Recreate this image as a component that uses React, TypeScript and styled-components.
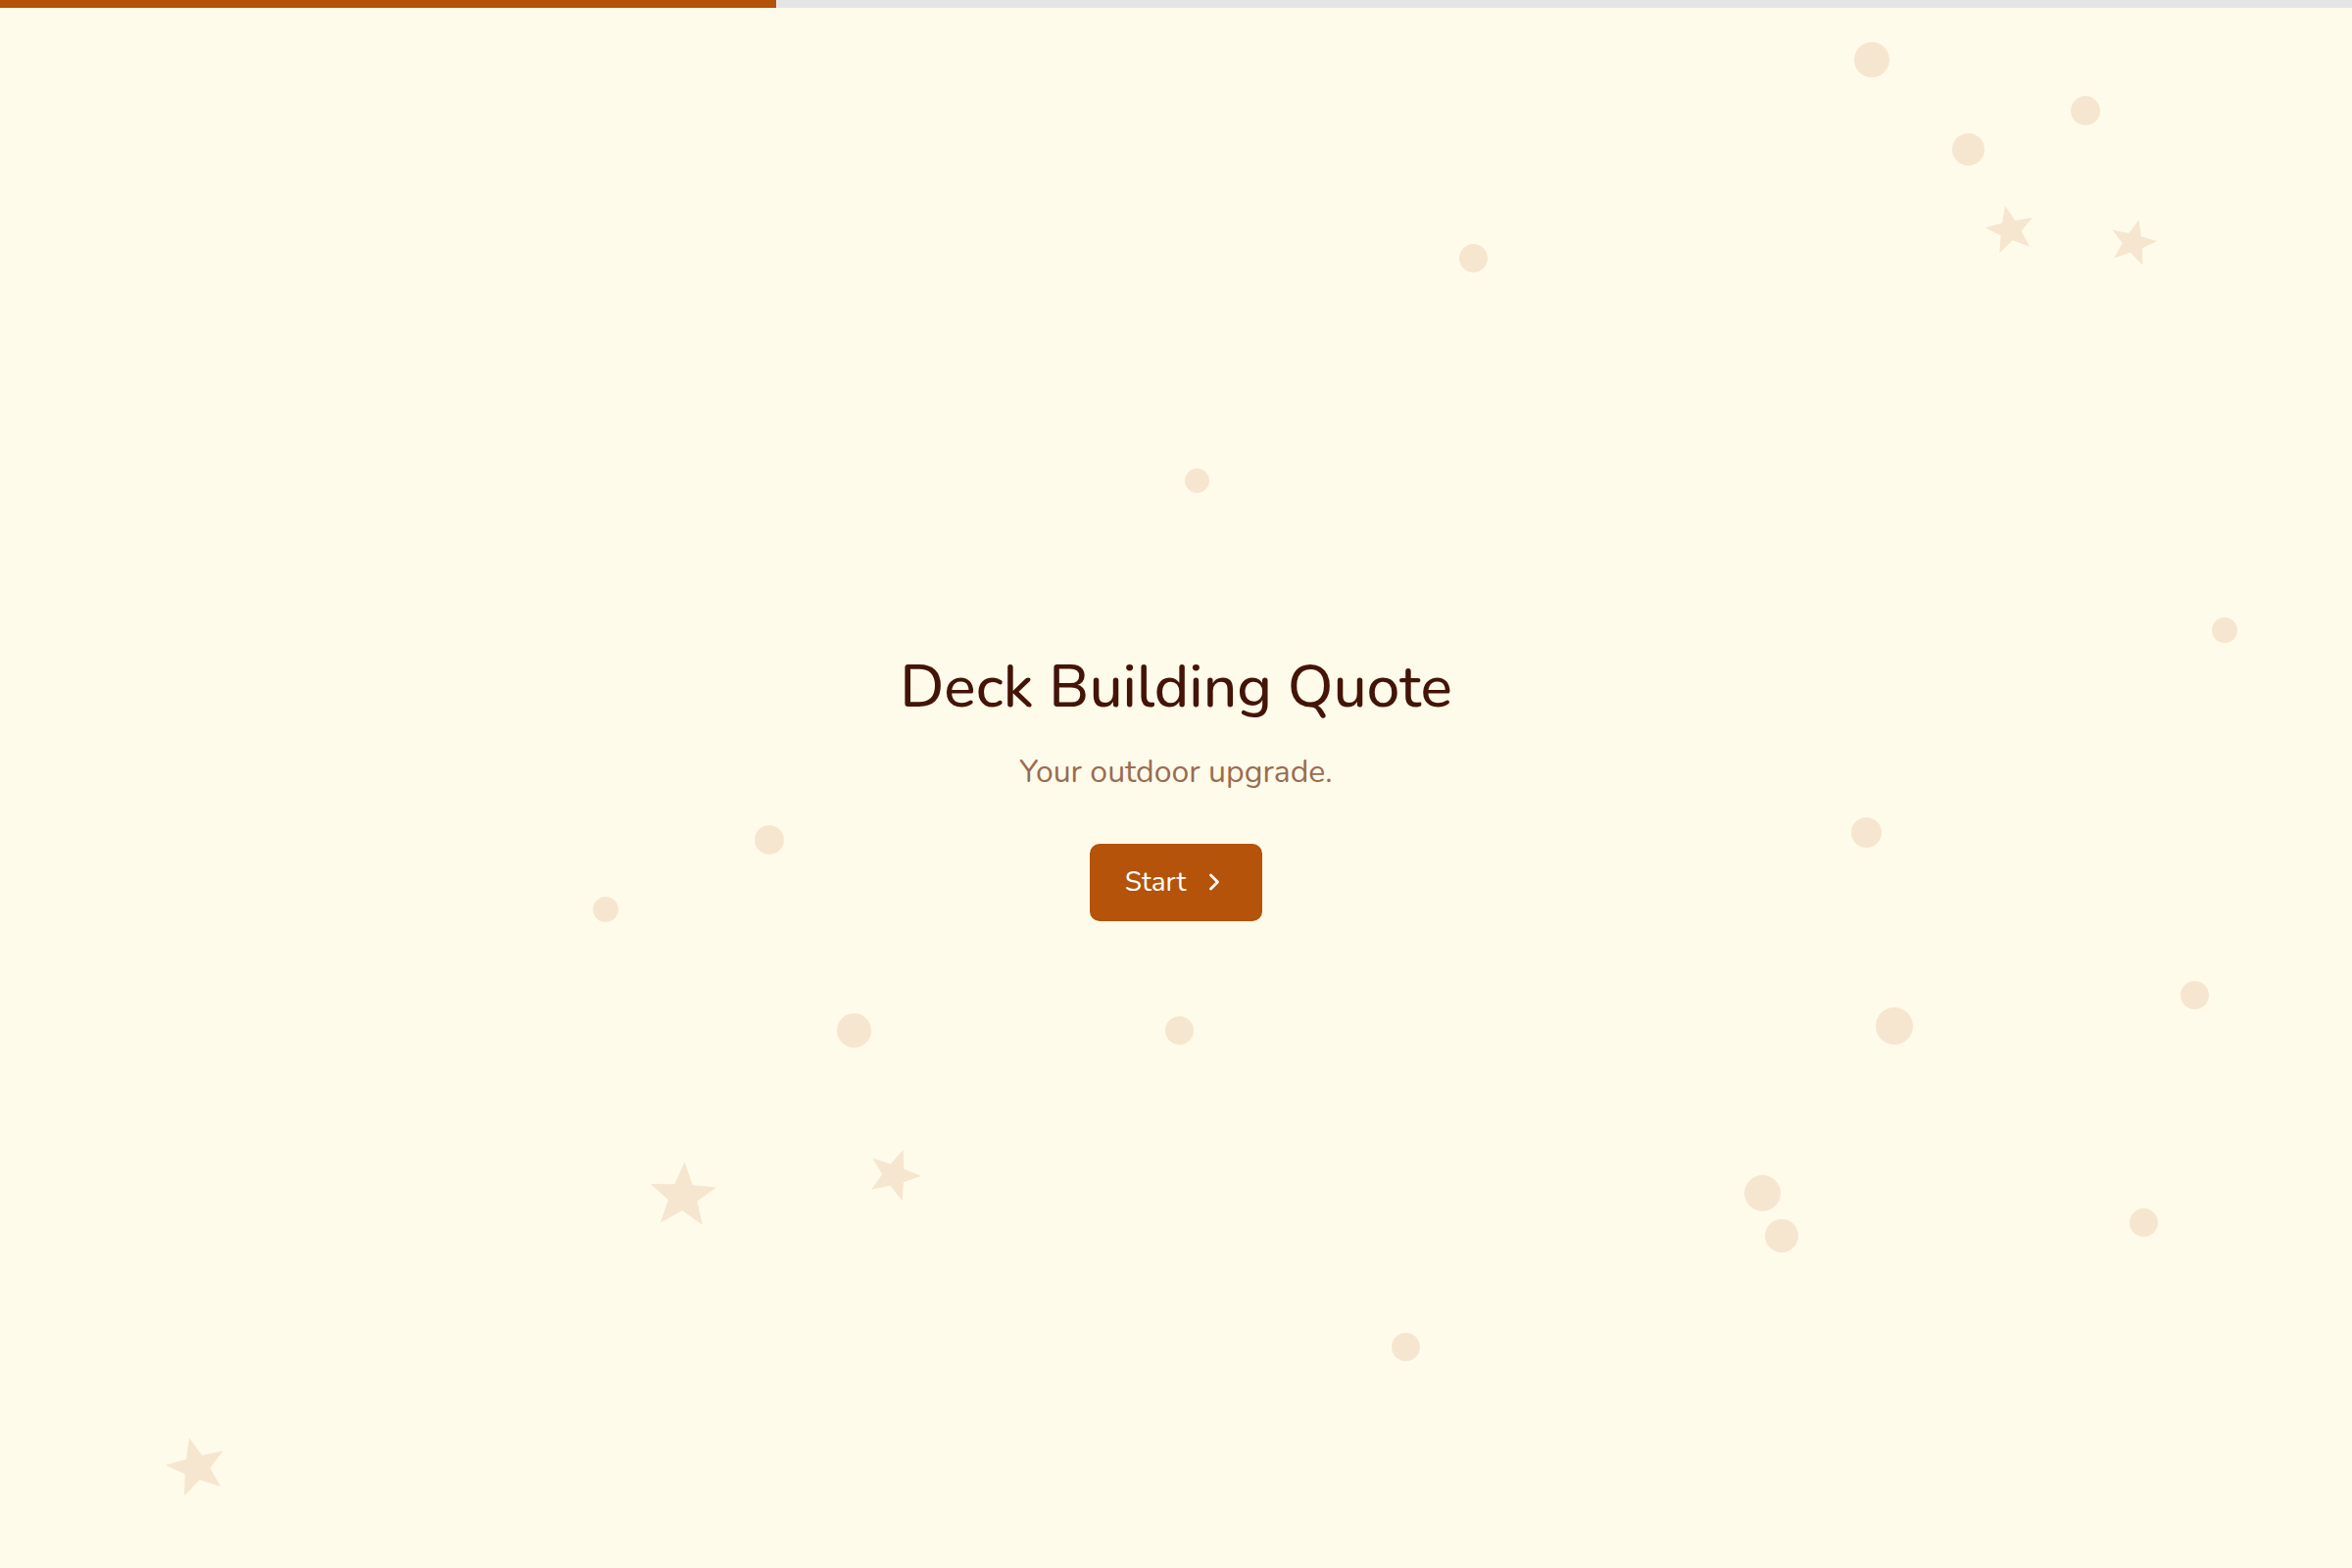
import styled, { createGlobalStyle } from "styled-components";
import { ChevronRight } from "lucide-react";

const GlobalStyle = createGlobalStyle`
  html, body {
    margin: 0;
    padding: 0;
    background: #fffbea;
  }
  body {
    font-family: "Nunito", Lato, "Noto Sans", sans-serif;
  }
`;

const Page = styled.div`
  position: relative;
  width: 100%;
  height: 100vh;
  overflow: hidden;
  background: #fffbea;
  display: flex;
  flex-direction: column;
`;

const Progress = styled.div`
  height: 8px;
  background: #e6e5e6;
  flex-shrink: 0;
`;

const ProgressFill = styled.div`
  height: 100%;
  background: #b45309;
`;

const Hero = styled.main`
  position: relative;
  z-index: 1;
  flex: 1;
  display: flex;
  flex-direction: column;
  align-items: center;
  justify-content: center;
  text-align: center;
  padding-bottom: 3px;
`;

const Title = styled.h1`
  margin: 0;
  font-size: 60.5px;
  font-weight: 500;
  line-height: 1.2;
  color: #431407;
`;

const Subtitle = styled.p`
  margin: 28px 0 0;
  font-size: 32px;
  line-height: 1.4;
  color: #9a6c50;
`;

const StartButton = styled.button`
  margin-top: 50px;
  display: flex;
  align-items: center;
  gap: 15px;
  height: 79px;
  padding: 0 35px 0 36px;
  border: none;
  border-radius: 10px;
  background: #b45309;
  color: #fff;
  font-family: inherit;
  font-size: 28px;
  cursor: pointer;
`;

// scattered decoration behind the hero
const Dot = styled.span<{ $size: number }>`
  position: absolute;
  width: ${(p) => p.$size}px;
  height: ${(p) => p.$size}px;
  margin: ${(p) => -p.$size / 2}px 0 0 ${(p) => -p.$size / 2}px;
  border-radius: 50%;
  background: #f6e6cf;
`;

const StarShape = styled.svg`
  position: absolute;
  fill: #f6e6cf;
`;

const dots = [
  { x: 1910, y: 61, d: 36 },
  { x: 2128, y: 113, d: 30 },
  { x: 2008, y: 152, d: 33 },
  { x: 1503, y: 263, d: 29 },
  { x: 1221, y: 490, d: 25 },
  { x: 2270, y: 643, d: 26 },
  { x: 1904, y: 849, d: 31 },
  { x: 785, y: 857, d: 30 },
  { x: 618, y: 928, d: 26 },
  { x: 871, y: 1051, d: 35 },
  { x: 1203, y: 1051, d: 29 },
  { x: 1933, y: 1047, d: 38 },
  { x: 2239, y: 1015, d: 29 },
  { x: 1798, y: 1217, d: 37 },
  { x: 1818, y: 1261, d: 34 },
  { x: 2187, y: 1247, d: 29 },
  { x: 1434, y: 1374, d: 29 },
];

const stars = [
  { x: 2051, y: 233, s: 54, r: -12 },
  { x: 2177, y: 246, s: 52, r: 14 },
  { x: 697, y: 1218, s: 74, r: 3 },
  { x: 913, y: 1197, s: 58, r: 20 },
  { x: 200, y: 1495, s: 66, r: -14 },
];

const Star = ({ x, y, s, r }: { x: number; y: number; s: number; r: number }) => (
  <StarShape
    viewBox="0 0 24 24"
    width={s}
    height={s}
    style={{ left: x - s / 2, top: y - s / 2, transform: `rotate(${r}deg)` }}
  >
    <polygon points="12,1.5 15,9 23,9.3 16.8,14.3 19,22 12,17.6 5,22 7.2,14.3 1,9.3 9,9" />
  </StarShape>
);

export default function App() {
  return (
    <Page>
      <GlobalStyle />
      <Progress>
        <ProgressFill style={{ width: "33%" }} />
      </Progress>
      {dots.map((d, i) => (
        <Dot key={i} $size={d.d} style={{ left: d.x, top: d.y }} />
      ))}
      {stars.map((s, i) => (
        <Star key={i} {...s} />
      ))}
      <Hero>
        <Title>Deck Building Quote</Title>
        <Subtitle>Your outdoor upgrade.</Subtitle>
        <StartButton>
          Start
          <ChevronRight size={28} strokeWidth={2.4} />
        </StartButton>
      </Hero>
    </Page>
  );
}
